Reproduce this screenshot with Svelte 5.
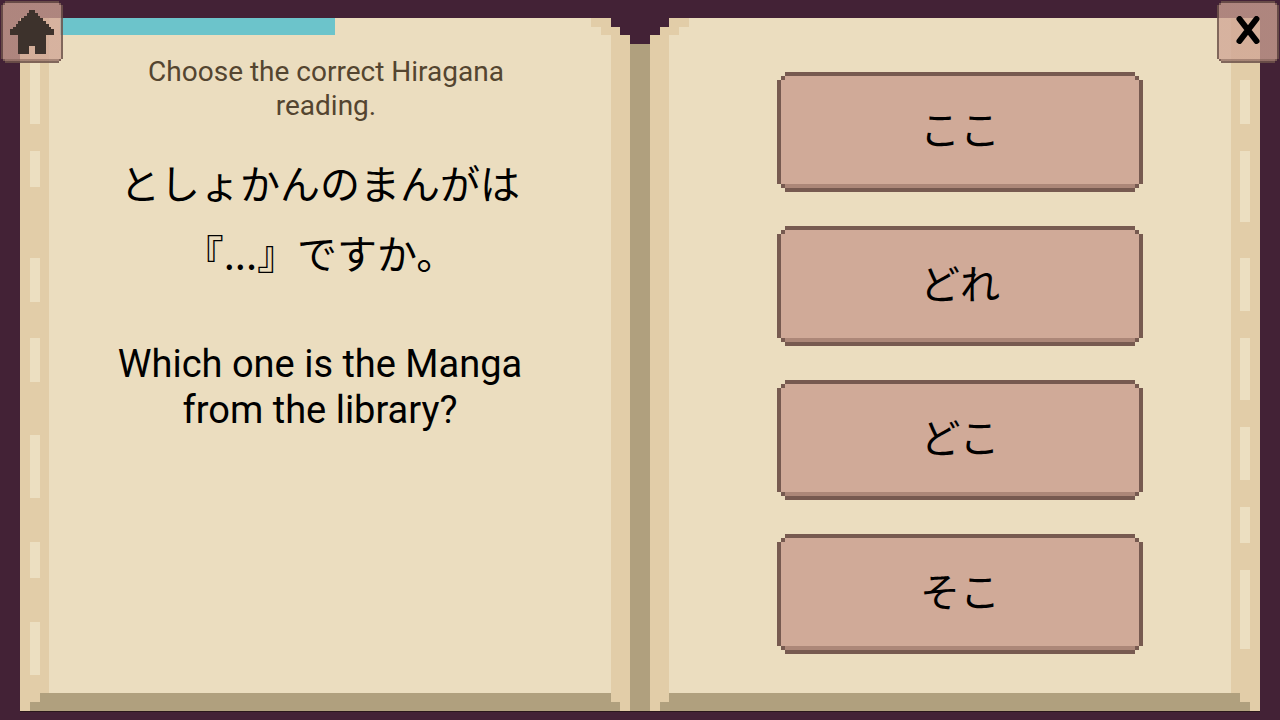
<script lang="ts">
    type Tab = {gap: number; height: number}

    const question = {
        prompt: 'Choose the correct Hiragana reading.',
        japanese: ['としょかんのまんがは', '『...』ですか。'],
        english: ['Which one is the Manga', 'from the library?'],
    }
    const answers = ['ここ', 'どれ', 'どこ', 'そこ']

    /** Percentage of the lesson that is done */
    const progress = 50

    // Loose page edges showing along the cover, gap is the space above each one
    const leftTabs: Tab[] = [
        {gap: 45, height: 61},
        {gap: 27, height: 36},
        {gap: 71, height: 44},
        {gap: 36, height: 44},
        {gap: 53, height: 63},
        {gap: 44, height: 36},
        {gap: 44, height: 53},
        {gap: 36, height: 0},
    ]
    const rightTabs: Tab[] = [
        {gap: 62, height: 44},
        {gap: 27, height: 71},
        {gap: 36, height: 53},
        {gap: 27, height: 62},
        {gap: 27, height: 53},
        {gap: 27, height: 36},
        {gap: 27, height: 79},
        {gap: 62, height: 0},
    ]

    let selected: string | undefined = $state(undefined)
</script>

{#snippet page(tabs: Tab[], side: 'left' | 'right')}
    <div class="page {side}">
        <div class="tabs">
            {#each tabs as tab}
                <span style={`flex-grow: ${tab.gap}`}></span>
                <span class="tab" style={`flex-grow: ${tab.height}`}></span>
            {/each}
        </div>
    </div>
{/snippet}

<main>
    <div class="book" aria-hidden="true">
        {@render page(leftTabs, 'left')}
        <div class="spine"></div>
        {@render page(rightTabs, 'right')}
    </div>

    <div class="content">
        <section class="question">
            <div
                class="progress"
                role="progressbar"
                aria-label="Progress"
                aria-valuemin="0"
                aria-valuemax="100"
                aria-valuenow={progress}
            >
                <div class="bar" style={`width: ${progress}%`}></div>
            </div>
            <p class="prompt">{question.prompt}</p>
            <p class="japanese" lang="ja">
                {question.japanese[0]}<br />{question.japanese[1]}
            </p>
            <p class="english">{question.english[0]}<br />{question.english[1]}</p>
        </section>

        <section class="answers" lang="ja">
            {#each answers as answer}
                <button
                    class="pixel answer"
                    aria-pressed={selected === answer}
                    onclick={() => (selected = answer)}>{answer}</button
                >
            {/each}
        </section>
    </div>

    <nav>
        <button class="pixel corner" aria-label="Home">
            <svg class="home" viewBox="0 0 16 16" shape-rendering="crispEdges">
                <path
                    d="M7 0h2v1h1v1h1v1h1v1h1v1h1v1h1v1h1v2h-3v7h-4v-3h-2v3h-4v-7h-3v-2h1v-1h1v-1h1v-1h1v-1h1v-1h1v-1h1z"
                />
            </svg>
        </button>
        <button class="pixel corner" aria-label="Close">
            <svg class="close" viewBox="0 0 24 28">
                <path d="M3.500 3L20.500 25M20.500 3L3.500 25" />
            </svg>
        </button>
    </nav>
</main>

<style>
    :global(body) {
        margin: 0;
        background-color: #432236;
    }

    main {
        --paper: #ebddbf;
        --tan: #e2cda8;
        --shade: #b0a07e;

        display: grid;
        min-height: 100vh;
        background-color: #432236;
        font-family: Roboto, 'Noto Sans CJK JP', sans-serif;
    }

    /* book, content and nav share one cell */
    main > * {
        grid-area: 1 / 1;
        min-width: 0;
    }

    .book {
        display: grid;
        grid-template-columns: 1fr 20px 1fr;
        margin: 18px 20px 8px;
        border-bottom: 1px solid #2b181c;
    }

    .spine {
        margin-top: 26px;
        background-color: var(--shade);
    }

    .page {
        display: flex;
        background:
            linear-gradient(var(--tan), var(--tan)) right 19px top 0 / 20px 9px,
            linear-gradient(var(--tan), var(--tan)) right 10px top 9px / 19px 8px,
            linear-gradient(var(--tan), var(--tan)) right 0 top 17px / 19px calc(100% - 35px),
            linear-gradient(var(--tan), var(--tan)) right 0 bottom 9px / 19px 9px,
            linear-gradient(var(--tan), var(--tan)) right 0 bottom 0 / 10px 9px,
            linear-gradient(var(--tan), var(--tan)) left 0 top 0 / 29px calc(100% - 18px),
            linear-gradient(var(--tan), var(--tan)) left 0 bottom 9px / 20px 9px,
            linear-gradient(var(--tan), var(--tan)) left 0 bottom 0 / 10px 9px,
            linear-gradient(var(--shade), var(--shade)) left 0 bottom 0 / 100% 18px,
            var(--paper);
        background-repeat: no-repeat;
        clip-path: polygon(
            0 0,
            calc(100% - 19px) 0,
            calc(100% - 19px) 9px,
            calc(100% - 10px) 9px,
            calc(100% - 10px) 17px,
            100% 17px,
            100% 100%,
            0 100%
        );
    }
    .page.right {
        transform: scaleX(-1);
    }

    .tabs {
        display: flex;
        flex-direction: column;
        width: 10px;
        margin-left: 10px;
    }
    .tab {
        background-color: #ecdfc1;
    }

    .content {
        z-index: 1;
        display: grid;
        grid-template-columns: 1fr 1fr;
    }

    .question {
        padding: 18px 30px 18px 50px;
        text-align: center;
    }
    .question p {
        margin: 0;
    }

    .progress {
        height: 17px;
        margin-left: 10px;
    }
    .bar {
        height: 100%;
        background-color: #6cc4cb;
    }

    .question .prompt {
        max-width: 400px;
        margin: 20px auto 0;
        padding-right: 8px;
        color: #544530;
        font-size: 28px;
        line-height: 34px;
    }
    .question .japanese {
        margin: 24px 20px 0 0;
        font-family: 'Noto Sans CJK JP', sans-serif;
        font-size: 40px;
        line-height: 70px;
    }
    .question .english {
        margin: 54px 20px 0 0;
        font-size: 38px;
        line-height: 46px;
    }

    .answers {
        display: flex;
        flex-direction: column;
        align-items: center;
        justify-content: center;
        gap: 34px;
        padding: 8px 0 2px;
    }

    .pixel {
        --px: 4px;
        --line: #775a50;
        --under: #ac8778;
        --fill: #d0aa98;

        padding: 0;
        border: none;
        cursor: pointer;
        color: #000;
        background:
            linear-gradient(var(--line), var(--line)) top / calc(100% - 4 * var(--px)) var(--px),
            linear-gradient(var(--line), var(--line)) bottom / calc(100% - 4 * var(--px)) var(--px),
            linear-gradient(var(--line), var(--line)) left / var(--px) calc(100% - 4 * var(--px)),
            linear-gradient(var(--line), var(--line)) right / var(--px) calc(100% - 4 * var(--px)),
            linear-gradient(var(--line), var(--line)) left var(--px) top var(--px) / var(--px) var(--px),
            linear-gradient(var(--line), var(--line)) right var(--px) top var(--px) / var(--px) var(--px),
            linear-gradient(var(--line), var(--line)) left var(--px) bottom var(--px) / var(--px) var(--px),
            linear-gradient(var(--line), var(--line)) right var(--px) bottom var(--px) / var(--px) var(--px),
            linear-gradient(var(--under), var(--under)) center bottom var(--px) / calc(100% - 4 * var(--px)) var(--px),
            linear-gradient(var(--fill), var(--fill)) center / calc(100% - 2 * var(--px)) calc(100% - 2 * var(--px));
        background-repeat: no-repeat;
    }
    .pixel:hover {
        filter: brightness(104%);
    }
    .pixel:focus-visible {
        outline: 2px solid #432236;
    }

    .answer {
        width: 366px;
        max-width: 90%;
        height: 120px;
        padding-bottom: 8px;
        font-family: 'Noto Sans CJK JP', sans-serif;
        font-size: 40px;
    }

    nav {
        z-index: 2;
        display: flex;
        justify-content: space-between;
        align-items: flex-start;
        align-self: start;
        padding: 1px;
        pointer-events: none;
    }

    .corner {
        --px: 2px;
        --line: rgba(110, 82, 74, 0.85);
        --under: rgba(120, 90, 80, 0.5);
        --fill: rgba(208, 165, 149, 0.76);

        display: flex;
        align-items: center;
        justify-content: center;
        width: 62px;
        height: 62px;
        pointer-events: auto;
    }

    .home {
        width: 44px;
        height: 44px;
        fill: #3d322c;
    }
    .close {
        width: 24px;
        height: 28px;
        margin-bottom: 4px;
        fill: none;
        stroke: #000;
        stroke-width: 6;
        stroke-linecap: round;
    }
</style>
